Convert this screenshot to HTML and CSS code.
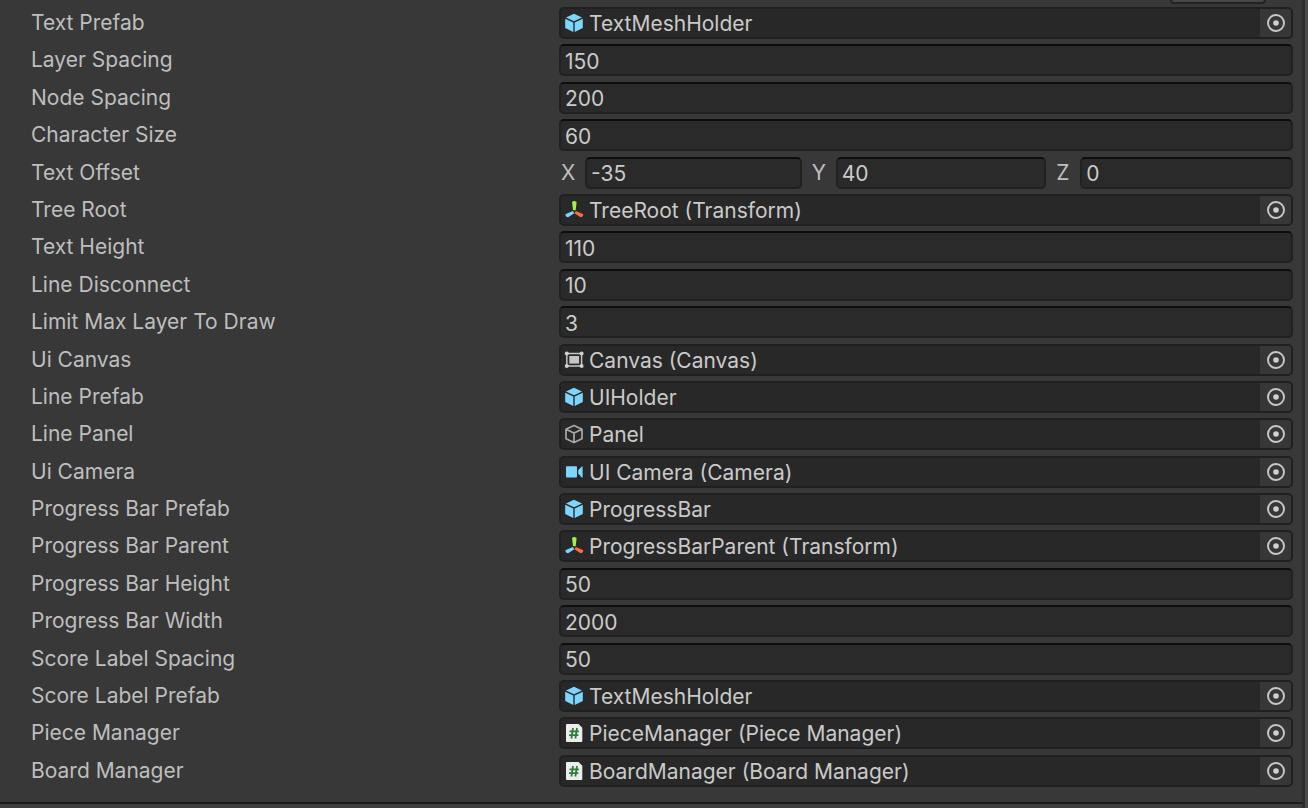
FILE: index.html
```html
<!DOCTYPE html>
<html lang="en">
<head>
    <meta charset="UTF-8">
    <meta name="viewport" content="width=device-width, initial-scale=1.0">
    <title>Inspector</title>
    <link rel="stylesheet" href="styles.css">
</head>
<body>
    <!-- shared icons -->
    <svg class="icon-defs" aria-hidden="true">
        <symbol id="icon-prefab" viewBox="0 0 20 20">
            <path fill="#7fd6fd" d="M10 .8 18 4.5 10 8.3 2 4.5z"/>
            <path fill="#7fd6fd" d="M1.2 5.7 9.3 9.5V19L1.2 15z"/>
            <path fill="#7fd6fd" d="M18.8 5.7 10.7 9.5V19l8.1-4z"/>
        </symbol>
        <symbol id="icon-object" viewBox="0 0 20 20">
            <path fill="none" stroke="#a8a8a8" stroke-width="1.7" stroke-linejoin="round" d="M10 1.5 18 5.3v9.4l-8 3.9-8-3.9V5.3zM2 5.3l8 3.8 8-3.8M10 9.1v9.5"/>
        </symbol>
        <symbol id="icon-transform" viewBox="0 0 20 20">
            <path fill="#a4ec4c" d="M8 2q2.3-1.8 4.6 0l-.9 8.2H9z"/>
            <path fill="#7fd6fd" d="m8.8 10.9 1.5 2.3-6.2 4q-2.5 0-2.7-2.9z"/>
            <path fill="#ff6b40" d="m11.9 10.9-1.5 2.3 6.2 4q2.500 0 2.700-2.900z"/>
        </symbol>
        <symbol id="icon-canvas" viewBox="0 0 20 20">
            <path fill="none" stroke="#c4c4c4" stroke-width="1.5" d="M2.8 3.5h14.800v12.600H2.800z"/>
            <path fill="#c4c4c4" d="M5.300 6h9.800v7.600H5.300z"/>
            <g fill="#d0d0d0">
                <circle cx="2.800" cy="3.500" r="2"/>
                <circle cx="17.600" cy="3.500" r="2"/>
                <circle cx="2.800" cy="16.100" r="2"/>
                <circle cx="17.600" cy="16.100" r="2"/>
            </g>
        </symbol>
        <symbol id="icon-camera" viewBox="0 0 20 20">
            <rect x="2" y="4.3" width="11" height="11.2" rx="1" fill="#7fd6fd"/>
            <path fill="#7fd6fd" d="M14.2 8.2 17.8 4.4h.8v11h-.8l-3.6-3.8z"/>
        </symbol>
        <symbol id="icon-script" viewBox="0 0 20 20">
            <path fill="#ededed" d="M3 1h11.5l3.8 3.800V18q0 1-1 1H3q-1 0-1-1V2q0-1 1-1z"/>
            <path fill="none" stroke="#2f7d3b" stroke-width="1.8" d="M9 5 7.400 15.500M13 5l-1.600 10.500M5.500 8.400h9.400M5 12.200h9.400"/>
        </symbol>
        <symbol id="icon-picker" viewBox="0 0 20 20">
            <circle cx="10" cy="10" r="8" fill="none" stroke="#c8c8c8" stroke-width="1.9"/>
            <circle cx="10" cy="10" r="2.8" fill="#d0d0d0"/>
        </symbol>
    </svg>

    <div class="inspector">
        <div class="component-header">
            <button class="header-button" type="button" aria-label="Open"></button>
        </div>

        <div class="properties">
            <div class="row">
                <label for="textPrefab">Text Prefab</label>
                <div class="object-field">
                    <svg class="icon"><use href="#icon-prefab"/></svg>
                    <span class="object-name">TextMeshHolder</span>
                    <button class="picker" id="textPrefab" type="button"><svg class="icon"><use href="#icon-picker"/></svg></button>
                </div>
            </div>
            <div class="row">
                <label for="layerSpacing">Layer Spacing</label>
                <input class="field" id="layerSpacing" type="text" value="150">
            </div>
            <div class="row">
                <label for="nodeSpacing">Node Spacing</label>
                <input class="field" id="nodeSpacing" type="text" value="200">
            </div>
            <div class="row">
                <label for="characterSize">Character Size</label>
                <input class="field" id="characterSize" type="text" value="60">
            </div>
            <div class="row">
                <span class="row-label">Text Offset</span>
                <div class="vector-field">
                    <label for="offsetX">X</label>
                    <input class="field" id="offsetX" type="text" value="-35">
                    <label for="offsetY">Y</label>
                    <input class="field" id="offsetY" type="text" value="40">
                    <label for="offsetZ">Z</label>
                    <input class="field" id="offsetZ" type="text" value="0">
                </div>
            </div>
            <div class="row">
                <label for="treeRoot">Tree Root</label>
                <div class="object-field">
                    <svg class="icon"><use href="#icon-transform"/></svg>
                    <span class="object-name">TreeRoot (Transform)</span>
                    <button class="picker" id="treeRoot" type="button"><svg class="icon"><use href="#icon-picker"/></svg></button>
                </div>
            </div>
            <div class="row">
                <label for="textHeight">Text Height</label>
                <input class="field" id="textHeight" type="text" value="110">
            </div>
            <div class="row">
                <label for="lineDisconnect">Line Disconnect</label>
                <input class="field" id="lineDisconnect" type="text" value="10">
            </div>
            <div class="row">
                <label for="limitMaxLayer">Limit Max Layer To Draw</label>
                <input class="field" id="limitMaxLayer" type="text" value="3">
            </div>
            <div class="row">
                <label for="uiCanvas">Ui Canvas</label>
                <div class="object-field">
                    <svg class="icon"><use href="#icon-canvas"/></svg>
                    <span class="object-name">Canvas (Canvas)</span>
                    <button class="picker" id="uiCanvas" type="button"><svg class="icon"><use href="#icon-picker"/></svg></button>
                </div>
            </div>
            <div class="row">
                <label for="linePrefab">Line Prefab</label>
                <div class="object-field">
                    <svg class="icon"><use href="#icon-prefab"/></svg>
                    <span class="object-name">UIHolder</span>
                    <button class="picker" id="linePrefab" type="button"><svg class="icon"><use href="#icon-picker"/></svg></button>
                </div>
            </div>
            <div class="row">
                <label for="linePanel">Line Panel</label>
                <div class="object-field">
                    <svg class="icon"><use href="#icon-object"/></svg>
                    <span class="object-name">Panel</span>
                    <button class="picker" id="linePanel" type="button"><svg class="icon"><use href="#icon-picker"/></svg></button>
                </div>
            </div>
            <div class="row">
                <label for="uiCamera">Ui Camera</label>
                <div class="object-field">
                    <svg class="icon"><use href="#icon-camera"/></svg>
                    <span class="object-name">UI Camera (Camera)</span>
                    <button class="picker" id="uiCamera" type="button"><svg class="icon"><use href="#icon-picker"/></svg></button>
                </div>
            </div>
            <div class="row">
                <label for="barPrefab">Progress Bar Prefab</label>
                <div class="object-field">
                    <svg class="icon"><use href="#icon-prefab"/></svg>
                    <span class="object-name">ProgressBar</span>
                    <button class="picker" id="barPrefab" type="button"><svg class="icon"><use href="#icon-picker"/></svg></button>
                </div>
            </div>
            <div class="row">
                <label for="barParent">Progress Bar Parent</label>
                <div class="object-field">
                    <svg class="icon"><use href="#icon-transform"/></svg>
                    <span class="object-name">ProgressBarParent (Transform)</span>
                    <button class="picker" id="barParent" type="button"><svg class="icon"><use href="#icon-picker"/></svg></button>
                </div>
            </div>
            <div class="row">
                <label for="barHeight">Progress Bar Height</label>
                <input class="field" id="barHeight" type="text" value="50">
            </div>
            <div class="row">
                <label for="barWidth">Progress Bar Width</label>
                <input class="field" id="barWidth" type="text" value="2000">
            </div>
            <div class="row">
                <label for="scoreSpacing">Score Label Spacing</label>
                <input class="field" id="scoreSpacing" type="text" value="50">
            </div>
            <div class="row">
                <label for="scorePrefab">Score Label Prefab</label>
                <div class="object-field">
                    <svg class="icon"><use href="#icon-prefab"/></svg>
                    <span class="object-name">TextMeshHolder</span>
                    <button class="picker" id="scorePrefab" type="button"><svg class="icon"><use href="#icon-picker"/></svg></button>
                </div>
            </div>
            <div class="row">
                <label for="pieceManager">Piece Manager</label>
                <div class="object-field">
                    <svg class="icon"><use href="#icon-script"/></svg>
                    <span class="object-name">PieceManager (Piece Manager)</span>
                    <button class="picker" id="pieceManager" type="button"><svg class="icon"><use href="#icon-picker"/></svg></button>
                </div>
            </div>
            <div class="row">
                <label for="boardManager">Board Manager</label>
                <div class="object-field">
                    <svg class="icon"><use href="#icon-script"/></svg>
                    <span class="object-name">BoardManager (Board Manager)</span>
                    <button class="picker" id="boardManager" type="button"><svg class="icon"><use href="#icon-picker"/></svg></button>
                </div>
            </div>
        </div>

        <div class="next-component"></div>
    </div>
</body>
</html>
```

FILE: styles.css
```css
* {
    box-sizing: border-box;
}

body {
    margin: 0;
    background: #383838;
    color: #bebebe;
    font-family: Inter, "Liberation Sans", sans-serif;
    font-size: 21px;
    line-height: 32px;
}

.icon-defs {
    display: none;
}

.inspector {
    display: flex;
    flex-direction: column;
    min-height: 100vh;
    border-right: 3px solid #4a4a4a;
    box-shadow: inset -3px 0 0 #2d2d2d;
}

.component-header {
    display: flex;
    justify-content: flex-end;
    height: 4px;
    padding-right: 39px;
}

.header-button {
    width: 96px;
    background: #474747;
    border: 2px solid #232323;
    border-top: 0;
    border-radius: 0 0 5px 5px;
    padding: 0;
}

.properties {
    flex: 1;
    display: flex;
    flex-direction: column;
    justify-content: space-between;
    padding: 3px 12px 15px 31px;
}

.row {
    display: grid;
    grid-template-columns: 528px minmax(0, 1fr);
}

.field,
.object-field {
    height: 32px;
    width: 100%;
    min-width: 0;
    background: #2a2a2a;
    border: 2px solid #212121;
    border-radius: 5px;
    color: #cacaca;
}

.field {
    border-top-color: #0d0d0d;
    padding: 2px 4px 0;
    font: inherit;
    line-height: 26px;
    outline: none;
}

.field:focus {
    border-color: #3a79bb;
}

.object-field {
    display: flex;
    align-items: center;
    gap: 5px;
    padding-left: 3px;
    background: #282828;
    border-color: #202020;
}

.object-name {
    flex: 1;
    padding-top: 2px;
    line-height: 26px;
    white-space: nowrap;
    overflow: hidden;
}

.icon {
    display: block;
    flex: none;
    width: 20px;
    height: 20px;
}

.picker {
    display: flex;
    align-items: center;
    justify-content: center;
    width: 31px;
    height: 28px;
    padding: 0;
    background: #373737;
    border: 0;
    border-radius: 0 3px 3px 0;
    cursor: pointer;
}

.picker:hover {
    background: #4c4c4c;
}

.vector-field {
    display: grid;
    grid-template-columns: 26px 217fr 34px 211fr 34px 213fr;
}

.vector-field label {
    padding-left: 2px;
}

.vector-field .field + label {
    padding-left: 10px;
}

.next-component {
    height: 6px;
    margin-right: 3px;
    background: #3e3e3e;
    border-top: 2px solid #1c1c1c;
}
```
